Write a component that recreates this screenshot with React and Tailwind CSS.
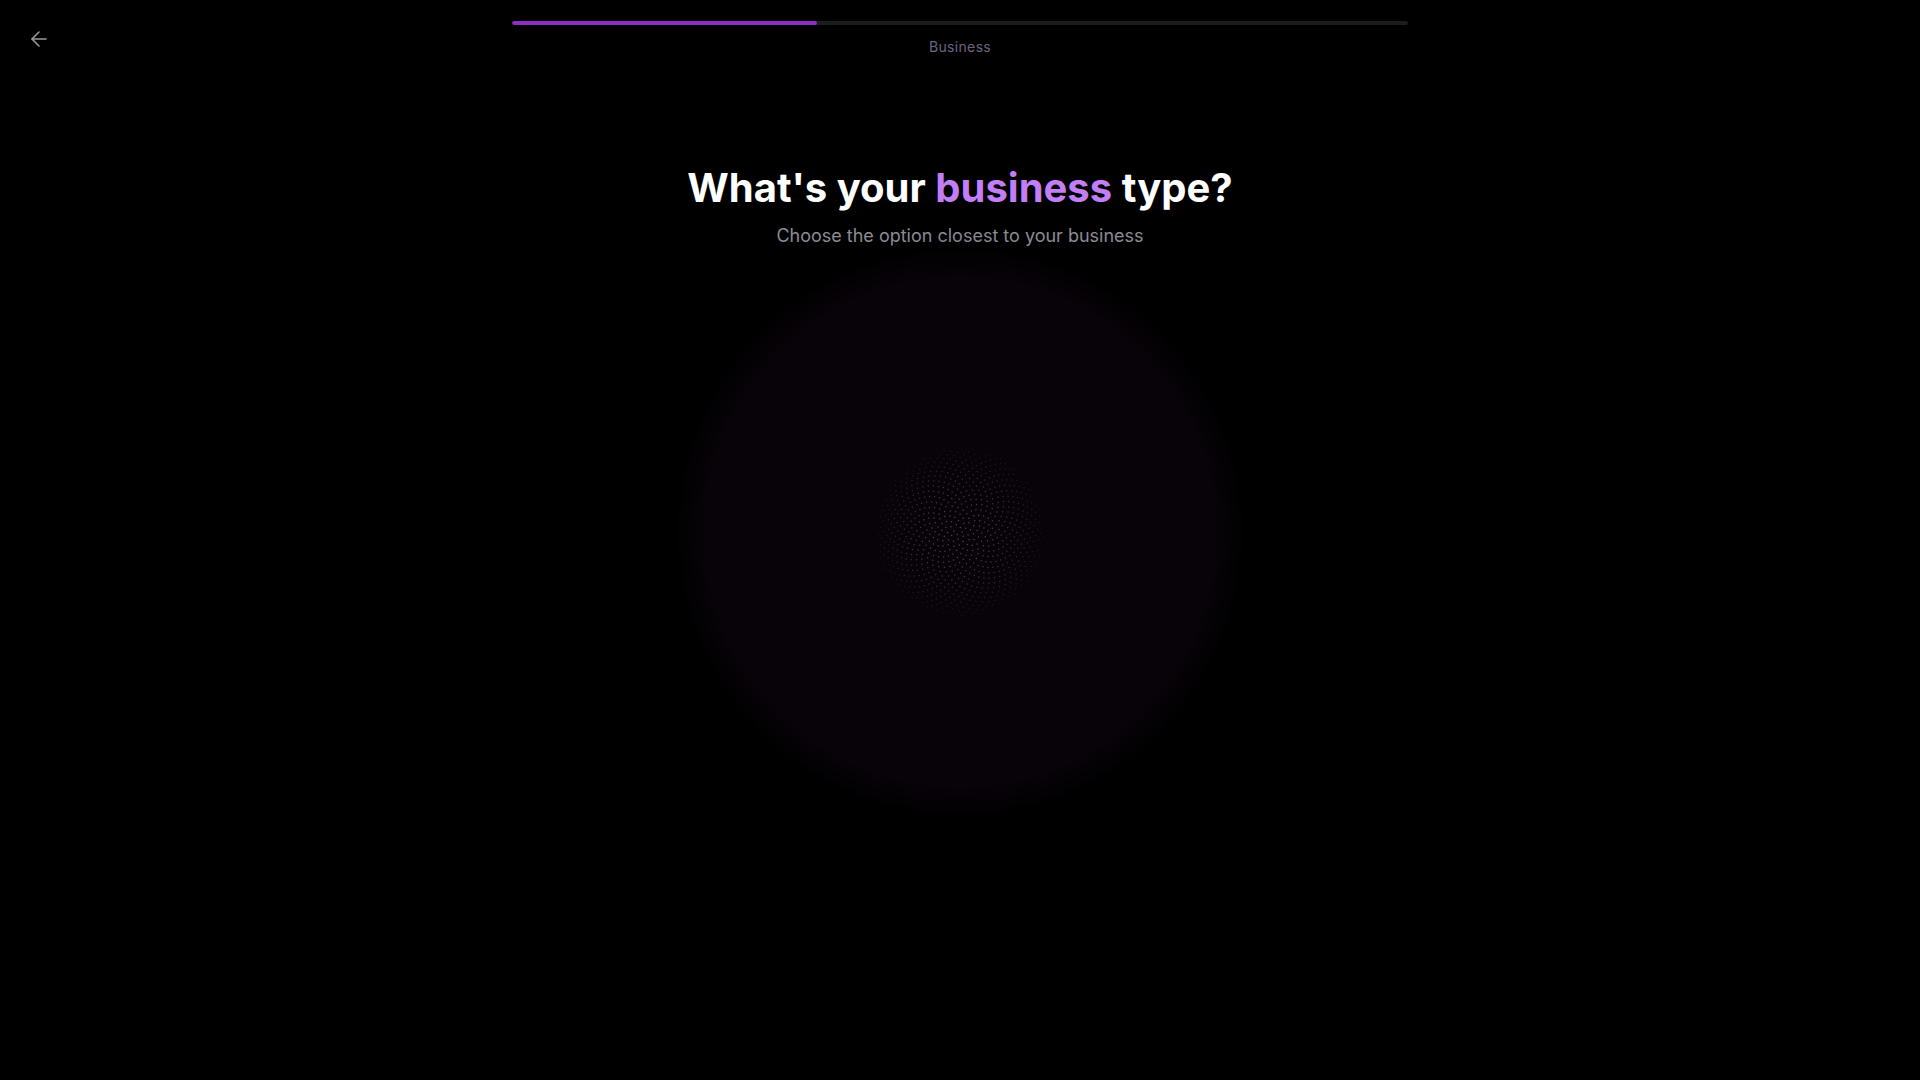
import { useMemo } from "react";
import { ArrowLeft } from "lucide-react";

// sunflower (vogel spiral) of faint dots used as the loading orb
const useOrbDots = (count, radius) =>
  useMemo(() => {
    const golden = Math.PI * (3 - Math.sqrt(5));
    const dots = [];
    for (let i = 0; i < count; i++) {
      const r = radius * Math.sqrt((i + 0.5) / count);
      const a = i * golden;
      const edge = r / radius;
      dots.push({
        x: radius + r * Math.cos(a),
        y: radius + r * Math.sin(a),
        o: Math.max(0, 0.8 - edge * edge * 0.65),
      });
    }
    return dots;
  }, [count, radius]);

const LoadingOrb = () => {
  const R = 84;
  const dots = useOrbDots(820, R);

  return (
    <div className="relative w-[560px] h-[560px] flex items-center justify-center">
      <div className="absolute inset-[10px] rounded-full bg-[#080309] blur-[14px]" />
      <svg
        width={R * 2}
        height={R * 2}
        viewBox={`0 0 ${R * 2} ${R * 2}`}
        className="relative"
      >
        {dots.map((d, i) => (
          <circle
            key={i}
            cx={d.x}
            cy={d.y}
            r="0.75"
            fill="#5e5466"
            fillOpacity={d.o}
          />
        ))}
      </svg>
    </div>
  );
};

export default function App() {
  const step = 1;
  const totalSteps = 3;

  return (
    <main className="relative min-h-screen bg-black text-white font-['Inter',sans-serif] overflow-hidden">
      {/* Back button */}
      <button
        aria-label="Go back"
        className="absolute top-[27px] left-[27px] text-[#9a9a9a] hover:text-white transition-colors"
      >
        <ArrowLeft size={24} strokeWidth={1.6} />
      </button>

      {/* Progress */}
      <div className="max-w-[896px] mx-auto pt-[21px]">
        <div className="h-1 w-full rounded-full bg-[#1c1c1f] overflow-hidden">
          <div
            className="h-full rounded-full bg-[#8a2ec4]"
            style={{ width: `${(step / totalSteps) * 100 + 0.7}%` }}
          />
        </div>
        <p className="mt-3 text-center text-sm leading-5 tracking-wide text-[#6e6480]">
          Business
        </p>
      </div>

      {/* Heading */}
      <div className="flex flex-col items-center mt-[109px]">
        <h1 className="text-[40px] leading-[44px] font-bold">
          What's your <span className="text-[#c17ef7]">business</span> type?
        </h1>
        <p className="mt-3 text-lg leading-7 text-[#8e8a96]">
          Choose the option closest to your business
        </p>

        <div className="mt-0.5">
          <LoadingOrb />
        </div>
      </div>
    </main>
  );
}
